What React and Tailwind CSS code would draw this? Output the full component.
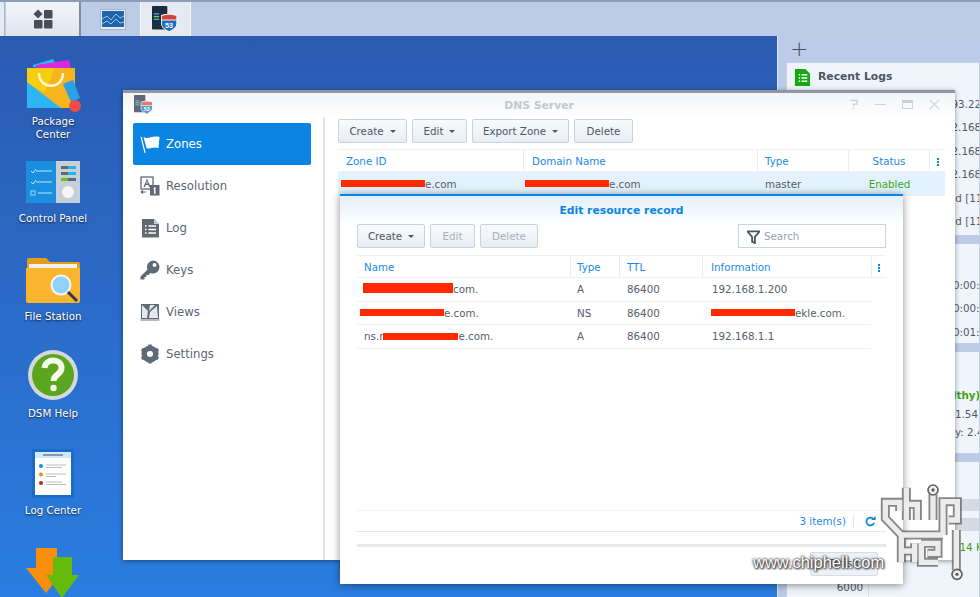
import React from "react";

const font = "font-['DejaVu_Sans',sans-serif]";

function DnsIcon({ className }) {
  return (
    <svg viewBox="0 0 30 30" className={className}>
      <rect x="0" y="0" width="17" height="26" rx="1" fill="#1d2b3f" />
      <rect x="2" y="8" width="6" height="1.500" fill="#3fa9f5" />
      <rect x="2" y="11" width="6" height="1.500" fill="#7ed321" />
      <rect x="2" y="14" width="6" height="1.500" fill="#3fa9f5" />
      <path d="M10 10q9-3 18 0v10q0 5-9 9q-9-4-9-9z" fill="#eef2f7" />
      <path d="M11 11q8-2.500 16 0v4H11z" fill="#d9403a" />
      <path d="M11 16h16v4q0 4.500-8 8q-8-3.500-8-8z" fill="#1d6fc0" />
      <text x="19" y="24" textAnchor="middle" fontSize="8" fontWeight="700" fill="#fff" fontFamily="Liberation Sans">53</text>
    </svg>
  );
}

function TopBar() {
  return (
    <div className="flex h-[37px] bg-[#bccbe6] border-t-2 border-t-[#8d9db8] border-b border-b-[#2d5aa6] shrink-0">
      <div className="w-[5px] bg-[#e6eaf2] border-r border-[#a9b6cc]" />
      <div className="w-[75px] bg-gradient-to-b from-[#f3f5f9] to-[#dfe4ee] border-r-2 border-[#7f8ba0] flex items-center justify-center ml-px">
        <svg viewBox="0 0 20 20" className="w-[20px] h-[20px]" fill="#474e59">
          <path d="M5 0.500l4.500 4.500L5 9.500 0.500 5z" />
          <rect x="11" y="1" width="8.500" height="8.500" rx="1" />
          <rect x="1" y="11" width="8.500" height="8.500" rx="1" />
          <rect x="11" y="11" width="8.500" height="8.500" rx="1" />
        </svg>
      </div>
      <div className="w-[59px] flex items-center justify-center pl-[5px]">
        <svg viewBox="0 0 26 21" className="w-[26px] h-[21px]">
          <rect x="0.500" y="0.500" width="25" height="20" fill="#e6ebf2" stroke="#aab4c2" />
          <rect x="2" y="2" width="22" height="16" fill="#1f63ad" />
          <path d="M2 10l5-3 4 4 5-6 4 4 4-2M2 15l5-3 4 3 5-5 4 4 4-1" fill="none" stroke="#b9dcf7" strokeWidth="0.800" />
        </svg>
      </div>
      <div className="w-[51px] bg-[#e5e9f1] border-x border-[#f4f6fa] flex items-center justify-center">
        <DnsIcon className="w-[27px] h-[27px]" />
      </div>
      <div className="flex-1" />
    </div>
  );
}

function Bag() {
  return (
    <svg viewBox="0 0 56 54" className="w-[56px] h-[54px] ml-[4px]">
      <path d="M6 7l20-6 4 8H6z" fill="#27bdf0" />
      <path d="M9 7l33-5 2 8H9z" fill="#d92ae0" />
      <path d="M0 10h48v40H0z" fill="#f6b51d" />
      <path d="M0 10h28L18 34 0 26z" fill="#f8cf10" />
      <path d="M0 24l34 26H0z" fill="#2fb6f2" />
      <path d="M12 15c0 17 24 17 24 0" fill="none" stroke="#fff6d8" strokeWidth="2.500" />
      <path d="M36 26l10-4 7 18-9 4z" fill="#2aa0e6" />
      <circle cx="48" cy="48" r="6" fill="#ef4b4b" />
    </svg>
  );
}

function Panel() {
  return (
    <svg viewBox="0 0 54 42" className="w-[54px] h-[42px]">
      <rect x="0" y="0" width="30" height="42" fill="#1a8fe0" />
      <rect x="30" y="0" width="24" height="42" fill="#c7d0d8" />
      <path d="M5 10l2 2 3-4M5 21l2 2 3-4" fill="none" stroke="#bfe6ff" strokeWidth="1" />
      <rect x="5" y="30" width="4" height="4" fill="none" stroke="#bfe6ff" strokeWidth="0.800" />
      <path d="M10 10h16M10 21h16M12 32h14" stroke="#bfe6ff" strokeWidth="1" />
      <rect x="35" y="5" width="15" height="3" fill="#5f6a75" />
      <rect x="42" y="5" width="8" height="3" fill="#21b5ea" />
      <rect x="35" y="11" width="15" height="3" fill="#5f6a75" />
      <rect x="42" y="11" width="8" height="3" fill="#21b5ea" />
      <rect x="35" y="17" width="15" height="3" fill="#5f6a75" />
      <rect x="35" y="17" width="7" height="3" fill="#62c31d" />
      <circle cx="42" cy="31" r="6" fill="#f4f6f8" />
    </svg>
  );
}

function Folder() {
  return (
    <svg viewBox="0 0 54 46" className="w-[54px] h-[46px]">
      <path d="M1 3q0-2 2-2h17l4 4h28q2 0 2 2v6H1z" fill="#e49f1a" />
      <rect x="3" y="7" width="48" height="6" fill="#f1f1ee" />
      <path d="M0 11h54v33q0 2-2 2H2q-2 0-2-2z" fill="#f9b52e" />
      <circle cx="35" cy="28" r="9.500" fill="#8fd2f7" stroke="#f4f6f8" strokeWidth="2" />
      <path d="M42 35l9 9" stroke="#2c3a57" strokeWidth="3" />
    </svg>
  );
}

function Help() {
  return (
    <svg viewBox="0 0 52 52" className="w-[52px] h-[52px]">
      <circle cx="26" cy="26" r="25" fill="#d3d8dc" />
      <circle cx="26" cy="26" r="21" fill="#5ba51f" />
      <path d="M17.500 19c1-10 17-10 17 0 0 7-8 6-8 13" fill="none" stroke="#f4fbe8" strokeWidth="6" />
      <circle cx="26.500" cy="39" r="3.200" fill="#f4fbe8" />
    </svg>
  );
}

function LogCenter() {
  return (
    <svg viewBox="0 0 42 50" className="w-[42px] h-[50px]">
      <rect x="0" y="0" width="42" height="49" rx="1.500" fill="#1a6cc8" />
      <rect x="3" y="3" width="36" height="43" fill="#fff" />
      <rect x="3" y="3" width="36" height="6" fill="#d3e8fb" />
      <path d="M11 6h20" stroke="#6d7e93" strokeWidth="1.500" />
      <circle cx="9" cy="17" r="2" fill="#1a8fe0" />
      <circle cx="9" cy="25.500" r="2" fill="#f08a12" />
      <circle cx="9" cy="34" r="2" fill="#c8230f" />
      <path d="M14 16h20M14 18.500h16M14 25h20M14 27.500h10M14 33h16M14 35.500h20" stroke="#bdbdbd" strokeWidth="1" />
    </svg>
  );
}

function Arrows() {
  return (
    <svg viewBox="0 0 54 52" className="w-[54px] h-[52px]">
      <path d="M10 1h21v19h10L20 46 0 21h10z" fill="#f78f0a" />
      <path d="M27 10h19v18h7L36 51 20 28h7z" fill="#66bb0a" />
    </svg>
  );
}

function DesktopIcon({ icon, label, className }) {
  return (
    <div className="flex flex-col items-center">
      {icon}
      <div className={`text-white text-[10.300px] leading-[13px] text-center [text-shadow:0_1px_2px_rgba(0,0,0,0.75)] whitespace-pre-line ${className}`}>
        {label}
      </div>
    </div>
  );
}

function Desktop() {
  return (
    <div className="w-[106px] flex flex-col items-center pt-[21px]">
      <DesktopIcon icon={<Bag />} label={"Package\nCenter"} className="mt-[3px]" />
      <div className="h-[20px]" />
      <DesktopIcon icon={<Panel />} label="Control Panel" className="mt-[9px]" />
      <div className="h-[32px]" />
      <DesktopIcon icon={<Folder />} label="File Station" className="mt-[7px]" />
      <div className="h-[26px]" />
      <DesktopIcon icon={<Help />} label="DSM Help" className="mt-[6px]" />
      <div className="h-[29px]" />
      <DesktopIcon icon={<LogCenter />} label="Log Center" className="mt-[5px]" />
      <div className="h-[30px]" />
      <Arrows />
    </div>
  );
}

function Card({ className, children }) {
  return <div className={`bg-[#f0f5fc] border border-[#c3cfe0] overflow-hidden ${className}`}>{children}</div>;
}

function Widgets() {
  return (
    <div className="absolute left-[777px] top-[36px] bottom-0 right-0 bg-[#bccce8] border-l border-[#e2e8f3] pl-[8px] flex flex-col overflow-hidden">
      <div className="text-[#4a5360] text-[22px] leading-[26px] h-[26px] pl-[4px] font-light">+</div>
      <Card className="h-[174px] shrink-0">
        <div className="flex items-center h-[28px] pl-[7px] gap-[7px]">
          <svg viewBox="0 0 18 20" className="w-[17px] h-[19px]">
            <path d="M1 1h11l5 5v13H1z" fill="#16a80f" />
            <path d="M5 7h1.500M8 7h6M5 10.500h1.500M8 10.500h6M5 14h1.500M8 14h6" stroke="#fff" strokeWidth="1.500" />
          </svg>
          <span className="font-bold text-[10.800px] text-[#4b5563]">Recent Logs</span>
        </div>
        <div className="pl-[158px] text-[10.300px] leading-[23.400px] text-[#4e5966] pt-[2px] whitespace-nowrap">
          <div>193.22</div>
          <div>92.168</div>
          <div>92.168</div>
          <div>92.168</div>
          <div className="pl-[4px]">ed [11</div>
          <div className="pl-[4px]">ed [11</div>
        </div>
      </Card>
      <Card className="h-[101px] mt-[7px] shrink-0">
        <div className="pl-[166px] pt-[30px] text-[10.300px] leading-[23.400px] text-[#4e5966] whitespace-nowrap">
          <div>0:00:0</div>
          <div>0:00:0</div>
          <div>0:01:1</div>
        </div>
      </Card>
      <Card className="h-[103px] mt-[7px] shrink-0">
        <div className="pl-[168px] pt-[34px] text-[10.300px] leading-[18.500px] text-[#4e5966] whitespace-nowrap">
          <div className="font-bold text-[#3aa30f] ml-[-9px]">althy)</div>
          <div>1.54</div>
          <div>y: 2.4</div>
        </div>
      </Card>
      <Card className="h-[200px] mt-[7px] shrink-0">
        <div className="h-[37px]" />
        <div className="h-[12px] bg-[#d6dbe3]" />
        <div className="h-[7px]" />
        <div className="h-[13px] bg-[#d6dbe3]" />
        <div className="pl-[166px] text-[10.300px] leading-[14px] text-[#3aa30f] mt-[9px] whitespace-nowrap">214 K</div>
        <div className="h-[26px]" />
        <div className="w-[82px] border-r border-[#dbe1ea] pr-[5px] text-right text-[10.300px] leading-[14px] text-[#4e5966]">
          <div>6000</div>
          <div>4000</div>
        </div>
      </Card>
    </div>
  );
}

function SideItem({ icon, label, active }) {
  return (
    <div
      className={`flex items-center h-[42px] pl-[7px] gap-[6px] rounded-[2px] text-[11.700px] ${
        active ? "bg-[#0a85e3] text-white" : "text-[#5b6673]"
      }`}
    >
      <div className="w-[20px] h-[20px] flex items-center justify-center">{icon}</div>
      <span className="pt-[2px]">{label}</span>
    </div>
  );
}

function Btn({ children, caret, disabled, className = "" }) {
  return (
    <div
      className={`h-[24px] pt-px rounded-[2px] border border-[#c9d3df] bg-gradient-to-b from-[#f8fafc] to-[#e9eef4] flex items-center justify-center gap-[6px] text-[10.300px] ${
        disabled ? "text-[#a8b1bb]" : "text-[#4d5866]"
      } ${className}`}
    >
      <span>{children}</span>
      {caret && <span className="w-0 h-0 border-x-[3px] border-x-transparent border-t-[3px] border-t-[#4d5866]" />}
    </div>
  );
}

function Sidebar() {
  return (
    <div className="w-[202px] border-r-2 border-[#e3e6ea] pl-[10px] pr-[12px] pt-[6px] shrink-0">
      <SideItem
        active
        label="Zones"
        icon={
          <svg viewBox="0 0 20 20" className="w-[20px] h-[20px] ml-[-1px]" fill="#fff">
            <path d="M0.500 3l4 16 1.200-.3-4-16z" />
            <path d="M3.500 3c5 3 8-2 16 0l-1 11c-6-2-9 2-12 0z" />
          </svg>
        }
      />
      <SideItem
        label="Resolution"
        icon={
          <svg viewBox="0 0 20 20" className="w-[20px] h-[20px]">
            <rect x="1" y="1" width="12" height="12" fill="none" stroke="#5f6a77" strokeWidth="1.300" />
            <path d="M7 2.500L3.500 11h1.500l.7-2h2.600l.7 2H10.500zM6.200 7.500L7 5l.8 2.500z" fill="#5f6a77" />
            <rect x="10" y="9" width="9.500" height="10.500" fill="#5f6a77" />
            <path d="M14 11.500l1.500-.5v7h-1.400v-5l-1 .3z" fill="#fff" />
            <path d="M1 16h5M1 16l2-1.500M1 16l2 1.500" stroke="#5f6a77" strokeWidth="1.200" fill="none" />
          </svg>
        }
      />
      <SideItem
        label="Log"
        icon={
          <svg viewBox="0 0 20 20" className="w-[20px] h-[20px]">
            <path d="M2 1h12l5 5v13.500H2z" fill="#5f6a77" />
            <path d="M14 1l5 5h-5z" fill="#c9ced4" />
            <path d="M5 8h1.500M8.500 8H16M5 11.500h1.500M8.500 11.500H16M5 15h1.500M8.500 15H16" stroke="#fff" strokeWidth="1.500" />
          </svg>
        }
      />
      <SideItem
        label="Keys"
        icon={
          <svg viewBox="0 0 20 20" className="w-[20px] h-[20px]" fill="#5f6a77">
            <path fillRule="evenodd" d="M13 0.500a6.500 6.500 0 1 1-2.500 12.500l-2 2H6.500v2h-2v2.500H.5v-3l7-7A6.500 6.500 0 0 1 13 .5zm1.500 2.500a2 2 0 1 0 .001 4.001A2 2 0 0 0 14.500 3z" />
          </svg>
        }
      />
      <SideItem
        label="Views"
        icon={
          <svg viewBox="0 0 20 20" className="w-[20px] h-[20px]">
            <path d="M1 2h18v15H1z" fill="#5f6a77" />
            <path d="M2 3l6 6-1 7H2zM10 3h5l-6 6zM17 4l1 12H9l1-6z" fill="#e6e9ec" />
            <rect x="0.500" y="17" width="19" height="2" fill="#b4bac2" />
          </svg>
        }
      />
      <SideItem
        label="Settings"
        icon={
          <svg viewBox="0 0 20 20" className="w-[20px] h-[20px]">
            <circle cx="10" cy="10" r="5.800" fill="none" stroke="#5f6a77" strokeWidth="5.500" />
            <path d="M10 0.500v3M10 16.500v3M1.800 5.200l2.600 1.500M15.600 13.300l2.600 1.500M1.800 14.800l2.600-1.500M15.600 6.700l2.600-1.500" stroke="#5f6a77" strokeWidth="3.500" />
          </svg>
        }
      />
    </div>
  );
}

function Redact({ className }) {
  return <span className={`absolute h-[7px] bg-[#ff2a00] ${className}`} />;
}

function MoreDots() {
  return (
    <div className="flex flex-col gap-px items-center">
      <span className="w-[2px] h-[2px] bg-[#0a85e3]" />
      <span className="w-[2px] h-[2px] bg-[#0a85e3]" />
      <span className="w-[2px] h-[2px] bg-[#0a85e3]" />
    </div>
  );
}

function ZoneGrid() {
  return (
    <div className="mt-[6px] ml-[13px] mr-[10px] text-[10.300px]">
      <div className="grid grid-cols-[186px_234px_91px_81px_1fr] h-[23px] border-y border-[#eef1f5] text-[#1c8ae6]">
        <div className="pl-[8px] pt-[2px] flex items-center border-r border-[#e9edf3]">Zone ID</div>
        <div className="pl-[8px] pt-[2px] flex items-center border-r border-[#e9edf3]">Domain Name</div>
        <div className="pl-[7px] pt-[2px] flex items-center border-r border-[#e9edf3]">Type</div>
        <div className="pt-[2px] flex items-center justify-center border-r border-[#e9edf3]">Status</div>
        <div className="pt-[2px] flex items-center justify-center"><MoreDots /></div>
      </div>
      <div className="grid grid-cols-[186px_234px_91px_81px_1fr] h-[24px] pt-px bg-[#e3f2fc] text-[#56606c] items-center">
        <div className="pl-[3px] relative"><Redact className="left-[3px] top-[3px] w-[84px]" /><span className="pl-[84px]">e.com</span></div>
        <div className="pl-px relative"><Redact className="left-[1px] top-[3px] w-[84px]" /><span className="pl-[84px]">e.com</span></div>
        <div className="pl-[7px]">master</div>
        <div className="text-center text-[#38a91c]">Enabled</div>
      </div>
    </div>
  );
}

function RecordRow({ name, type, info }) {
  return (
    <div className="grid grid-cols-[214px_49px_83px_1fr] h-[23.500px] pt-px border-b border-[#eef1f5] items-center text-[#56606c] mr-[15px]">
      <div className="pl-[7px] relative">{name}</div>
      <div className="pl-[6px]">{type}</div>
      <div className="pl-[7px]">86400</div>
      <div className="pl-[9px] relative">{info}</div>
    </div>
  );
}

function EditDialog() {
  return (
    <div className="absolute left-[340px] top-[194px] w-[563px] h-[390px] bg-white border-t-2 border-t-[#0a85e3] shadow-[0_1px_8px_rgba(0,0,0,0.45)] flex flex-col">
      <div className="h-[28px] pt-[3px] bg-gradient-to-b from-[#e2f0fb] to-white flex items-center justify-center font-bold text-[10.800px] text-[#0a85e3]">
        Edit resource record
      </div>
      <div className="px-[17px] flex items-center h-[24px] gap-[5px]">
        <Btn caret className="w-[68px]">Create</Btn>
        <Btn disabled className="w-[45px]">Edit</Btn>
        <Btn disabled className="w-[58px]">Delete</Btn>
        <div className="ml-auto w-[148px] h-[24px] border border-[#c9d3df] flex items-center pl-[8px] gap-[4px] pt-px text-[10.300px] text-[#9aa3ad]">
          <svg viewBox="0 0 14 14" className="w-[13px] h-[14px]">
            <path d="M0.500 1h13L8.500 7v6.500l-3-1.500V7z" fill="none" stroke="#4a5563" strokeWidth="2" />
          </svg>
          Search
        </div>
      </div>
      <div className="mx-[17px] mt-[7px] text-[10.300px] flex-1 flex flex-col">
        <div className="grid grid-cols-[214px_49px_83px_1fr_14px] h-[23px] border-y border-[#eef1f5] text-[#1c8ae6]">
          <div className="pl-[7px] pt-[2px] flex items-center border-r border-[#e9edf3]">Name</div>
          <div className="pl-[6px] pt-[2px] flex items-center border-r border-[#e9edf3]">Type</div>
          <div className="pl-[7px] pt-[2px] flex items-center border-r border-[#e9edf3]">TTL</div>
          <div className="pl-[8px] pt-[2px] flex items-center border-r border-[#e9edf3]">Information</div>
          <div className="pt-[2px] flex items-center justify-center"><MoreDots /></div>
        </div>
        <RecordRow
          name={<><Redact className="left-[6px] top-px w-[90px] !h-[10px]" /><span className="pl-[89px]">com.</span></>}
          type="A"
          info="192.168.1.200"
        />
        <RecordRow
          name={<><Redact className="left-[3px] top-[3px] w-[84px]" /><span className="pl-[80px]">e.com.</span></>}
          type="NS"
          info={<><Redact className="left-[8px] top-[3px] w-[84px]" /><span className="pl-[83px]">ekle.com.</span></>}
        />
        <RecordRow
          name={<><span>ns.r</span><Redact className="left-[26px] top-[4px] w-[75px]" /><span className="pl-[75px]">e.com.</span></>}
          type="A"
          info="192.168.1.1"
        />
        <div className="flex-1" />
        <div className="h-[22px] border-t border-[#f0f3f7] border-b-[1px] border-b-[#e2e9f2] flex items-center justify-end">
          <span className="text-[#1c8ae6] pr-[7px] border-r border-[#e3e8ee] leading-[13px]">3 item(s)</span>
          <svg viewBox="0 0 14 14" className="w-[11px] h-[11px] ml-[11px] mr-[10px]">
            <path d="M11.500 8.500a5 5 0 1 1-1.200-5" fill="none" stroke="#0a85e3" strokeWidth="2.200" />
            <path d="M8 5h5.500V0z" fill="#0a85e3" />
          </svg>
        </div>
        <div className="h-[12px]" />
        <div className="h-[3px] bg-[#e9e9e9]" />
      </div>
      <div className="h-[37px] relative">
        <div className="absolute right-[25px] top-[5px] w-[68px] h-[24px] rounded-[2px] border border-[#d7dde5] bg-[#eef1f5] flex items-center justify-center text-[10.300px] text-[#4d5866]">
          Finish
        </div>
      </div>
    </div>
  );
}

function DnsWindow() {
  return (
    <div className="absolute left-[123px] top-[90px] w-[832px] h-[470px] bg-white border-t-[3px] border-t-[#8d97a5] shadow-[0_1px_5px_rgba(0,0,0,0.4)] flex flex-col">
      <div className="h-[24px] shrink-0 pt-[3px] bg-gradient-to-b from-[#f2f4f7] to-white relative flex items-center justify-center">
        <DnsIcon className="absolute left-[11px] top-[2px] w-[20px] h-[20px] opacity-70" />
        <span className="font-bold text-[10.800px] text-[#c2c8cf]">DNS Server</span>
        <div className="absolute right-[15px] top-[6px] flex items-center gap-[16px]">
          <svg viewBox="0 0 12 12" className="w-[11px] h-[11px]" fill="none" stroke="#ccd1d8" strokeWidth="1.400">
            <path d="M2 1.500h8v4H6v2M6 9v2" />
          </svg>
          <div className="w-[11px] h-px bg-[#ccd1d8]" />
          <div className="w-[11px] h-[9px] border border-[#ccd1d8] border-t-[3px]" />
          <svg viewBox="0 0 12 12" className="w-[11px] h-[11px]" stroke="#ccd1d8" strokeWidth="1.200">
            <path d="M1 1l10 10M11 1L1 11" />
          </svg>
        </div>
      </div>
      <div className="flex flex-1 min-h-0">
        <Sidebar />
        <div className="flex-1 min-w-0">
          <div className="flex gap-[5px] pl-[13px] pt-[2px]">
            <Btn caret className="w-[69px]">Create</Btn>
            <Btn caret className="w-[55px]">Edit</Btn>
            <Btn caret className="w-[97px]">Export Zone</Btn>
            <Btn className="w-[59px]">Delete</Btn>
          </div>
          <ZoneGrid />
        </div>
      </div>
    </div>
  );
}

function Watermark() {
  const strokes =
    "M125 108V82H82V130L130 180H255M145 38V135M145 88H178V135M225 58V135M255 180V80H298V135H272M130 180V262M170 205V262M130 228H170M190 205V262H240M190 205H240V235H208M295 165V285";
  return (
    <>
      <svg viewBox="0 0 360 330" className="absolute left-[858px] top-[475px] w-[120px] h-[110px] pointer-events-none" fill="none">
        <path d={strokes} stroke="#5f5f5f" strokeOpacity="0.75" strokeWidth="27" />
        <path d={strokes} stroke="#f1f1f1" strokeOpacity="0.95" strokeWidth="16" />
        <circle cx="225" cy="45" r="15" fill="#f1f1f1" stroke="#5f5f5f" strokeWidth="5" />
        <circle cx="225" cy="45" r="5" fill="#5f5f5f" />
        <circle cx="297" cy="298" r="15" fill="#f1f1f1" stroke="#5f5f5f" strokeWidth="5" />
        <circle cx="297" cy="298" r="5" fill="#5f5f5f" />
      </svg>
      <div className="absolute left-[753px] top-[552px] font-['Liberation_Sans',sans-serif] text-[16.500px] leading-[20px] text-white pointer-events-none [text-shadow:0_0_2px_#333,0_0_3px_#333,1px_1px_2px_#333]">
        www.chiphell.com
      </div>
    </>
  );
}

export default function App() {
  return (
    <div className={`relative w-[980px] h-[597px] overflow-hidden flex flex-col ${font} bg-gradient-to-b from-[#2a59ae] to-[#2a7de1]`}>
      <TopBar />
      <Desktop />
      <Widgets />
      <DnsWindow />
      <EditDialog />
      <Watermark />
    </div>
  );
}
